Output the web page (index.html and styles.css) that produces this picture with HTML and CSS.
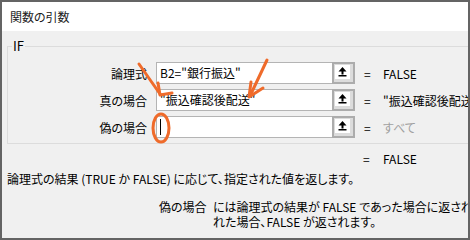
FILE: index.html
```html
<!DOCTYPE html>
<html lang="ja">

<head>
    <meta charset="UTF-8">
    <meta name="viewport" content="width=device-width, initial-scale=1.0">
    <title>関数の引数</title>
    <link rel="stylesheet" href="styles.css">
</head>

<body>
    <div class="dialog">
        <div class="titlebar">関数の引数</div>

        <div class="dialog-body">
            <fieldset class="group">
                <legend>IF</legend>

                <div class="arg">
                    <span class="arg-name">論理式</span>
                    <div class="field">
                        <div class="field-input">B2="銀行振込"</div>
                        <span class="pick"><span class="pick-face">
                            <svg width="15" height="14" viewBox="0 0 15 14"><path d="M3.5 6.5 L7.5 2 L11.5 6.5 Z M6.5 6 h2 v3.5 h-2 Z M3.5 10 h8 v1.5 h-8 Z" fill="#000"/></svg>
                        </span></span>
                    </div>
                    <span class="eq">=</span>
                    <span class="arg-value">FALSE</span>
                </div>

                <div class="arg">
                    <span class="arg-name">真の場合</span>
                    <div class="field">
                        <div class="field-input">"振込確認後配送"</div>
                        <span class="pick"><span class="pick-face">
                            <svg width="15" height="14" viewBox="0 0 15 14"><path d="M3.5 6.5 L7.5 2 L11.5 6.5 Z M6.5 6 h2 v3.5 h-2 Z M3.5 10 h8 v1.5 h-8 Z" fill="#000"/></svg>
                        </span></span>
                    </div>
                    <span class="eq">=</span>
                    <span class="arg-value">"振込確認後配送"</span>
                </div>

                <div class="arg">
                    <span class="arg-name">偽の場合</span>
                    <div class="field">
                        <div class="field-input"><span class="caret"></span></div>
                        <span class="pick"><span class="pick-face">
                            <svg width="15" height="14" viewBox="0 0 15 14"><path d="M3.5 6.5 L7.5 2 L11.5 6.5 Z M6.5 6 h2 v3.5 h-2 Z M3.5 10 h8 v1.5 h-8 Z" fill="#000"/></svg>
                        </span></span>
                    </div>
                    <span class="eq">=</span>
                    <span class="arg-value muted">すべて</span>
                </div>
            </fieldset>

            <div class="result">
                <span class="eq">=</span>
                <span>FALSE</span>
            </div>

            <p class="desc">論理式の結果 (TRUE か FALSE) に応じて、指定された値を返します。</p>

            <div class="arg-help">
                <span class="help-name">偽の場合</span>
                <div class="help-text">
                    <div>には論理式の結果が FALSE であった場合に返される値を指定します。省略さ</div>
                    <div>れた場合、FALSE が返されます。</div>
                </div>
            </div>
        </div>

        <!-- orange annotations drawn over the dialog -->
        <svg class="marks" width="470" height="240" viewBox="0 0 470 240">
            <g fill="none" stroke="#ef6b2b" stroke-width="3" stroke-linecap="round" stroke-linejoin="round">
                <path d="M139 64 L160 94" />
                <path d="M158 83 L160 95 L172 93" />
                <path d="M267 60 L250 96" />
                <path d="M251 82 L249 97 L263 88" />
                <ellipse cx="161" cy="128" rx="8" ry="14" />
            </g>
        </svg>
    </div>
</body>

</html>
```

FILE: styles.css
```css
body, html {
    margin: 0;
    padding: 0;
    width: 470px;
    height: 240px;
    overflow: hidden;
    font-family: "Noto Sans CJK JP", sans-serif;
    font-size: 12px;
    font-feature-settings: "palt";
    color: #000;
}

.dialog {
    position: relative;
    box-sizing: border-box;
    width: 470px;
    height: 240px;
    border: 2px solid #646464;
    background-color: #f0f0f0;
    overflow: hidden;
}

.titlebar {
    height: 29px;
    line-height: 29px;
    padding-left: 8px;
    background-color: #fff;
    color: #1a1a1a;
}

.dialog-body {
    padding-top: 7px;
}

/* group box */
.group {
    margin: 0 -20px 0 5px;
    padding: 8px 0 5px 4px;
    border: 1px solid #dcdcdc;
    display: flex;
    flex-direction: column;
    gap: 5px;
}

.group legend {
    padding: 0 1px;
    font-size: 13px;
    line-height: 16px;
}

.arg {
    display: flex;
    align-items: center;
    height: 22px;
    white-space: nowrap;
}

.arg-name {
    width: 135px;
    text-align: right;
}

.field {
    display: flex;
    width: 199px;
    height: 22px;
    margin-left: 9px;
    box-sizing: border-box;
}

.field-input {
    flex: 1;
    box-sizing: border-box;
    border: 1px solid #b4b4b4;
    border-right: none;
    background-color: #fff;
    padding-left: 3px;
    line-height: 20px;
    display: flex;
    align-items: center;
}

.caret {
    display: inline-block;
    width: 1px;
    height: 16px;
    background-color: #000;
}

.pick {
    box-sizing: border-box;
    border: 2px solid #acacac;
    background-color: #dcdcdc;
    padding: 1px 3px 3px 1px;
}

.pick-face {
    display: block;
    width: 15px;
    height: 14px;
    background-color: #fff;
}

.pick-face svg {
    display: block;
}

.eq {
    width: 19px;
    margin-left: 9px;
}

.muted {
    color: #a0a0a0;
}

.result {
    display: flex;
    margin-top: 7px;
    padding-left: 361px;
    line-height: 15px;
}

.result .eq {
    width: 20px;
    margin-left: 0;
}

.desc {
    margin: 5px 0 0 0;
    padding-left: 5px;
    line-height: 15px;
    white-space: nowrap;
}

.arg-help {
    display: flex;
    margin-top: 13px;
    padding-left: 157px;
    line-height: 15px;
    white-space: nowrap;
}

.help-name {
    width: 54px;
    flex-shrink: 0;
}

.marks {
    position: absolute;
    top: -2px;
    left: -2px;
    pointer-events: none;
}
```
